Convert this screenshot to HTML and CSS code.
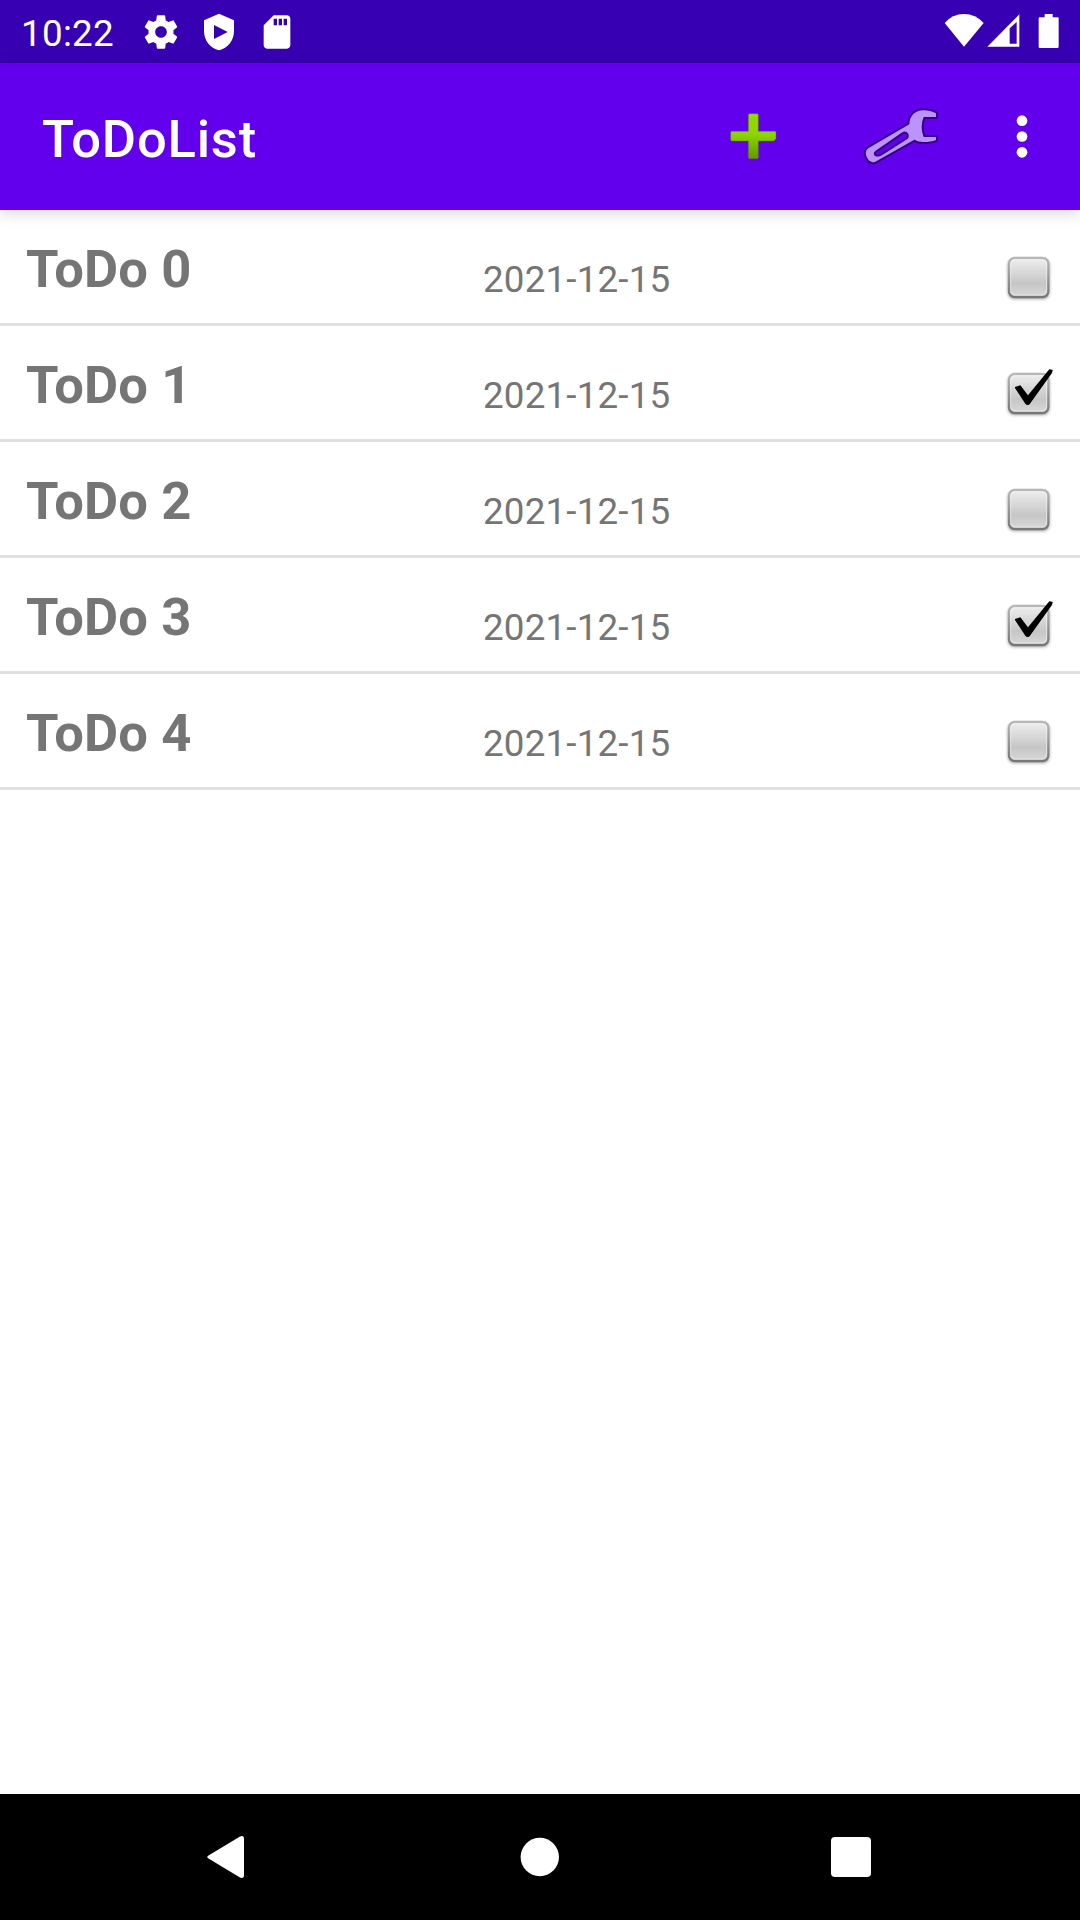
FILE: index.html
```html
<!DOCTYPE html>
<html lang="en">
<head>
<meta charset="utf-8">
<title>ToDoList</title>
<link rel="stylesheet" href="styles.css">
</head>
<body>
<svg class="defs" aria-hidden="true">
  <defs>
    <linearGradient id="box-fill" x1="0" y1="0" x2="0" y2="1">
      <stop offset="0" stop-color="#efefef"/><stop offset=".65" stop-color="#c6c6c6"/><stop offset="1" stop-color="#d8d8d8"/>
    </linearGradient>
    <linearGradient id="box-edge" x1="0" y1="0" x2="0" y2="1">
      <stop offset="0" stop-color="#b8b8b8"/><stop offset="1" stop-color="#777"/>
    </linearGradient>
    <linearGradient id="plus-fill" x1="0" y1="0" x2="0" y2="1">
      <stop offset="0" stop-color="#91dc00"/><stop offset=".45" stop-color="#8dd600"/><stop offset="1" stop-color="#649700"/>
    </linearGradient>
    <filter id="soft" x="-20%" y="-20%" width="140%" height="140%"><feGaussianBlur stdDeviation="4"/></filter>
    <filter id="smooth" x="-10%" y="-10%" width="120%" height="120%"><feGaussianBlur stdDeviation="1.500"/></filter>
    <symbol id="box" viewBox="30 30 240 240">
      <rect x="83" y="86" width="126" height="122" rx="20" fill="#000" opacity=".32" filter="url(#soft)"/>
      <g filter="url(#smooth)">
        <rect x="87" y="84" width="118" height="117" rx="17" fill="url(#box-fill)" stroke="url(#box-edge)" stroke-width="7"/>
        <rect x="92" y="89" width="108" height="106" rx="13" fill="none" stroke="#fff" stroke-opacity=".5" stroke-width="3"/>
      </g>
    </symbol>
    <symbol id="check" viewBox="30 30 240 240">
      <path d="M108 125L120 121L144 153L209 73L215 74L213 80L148 171Q143 177 138 171Z" fill="#000" stroke="#000" stroke-width="6" stroke-linejoin="round" filter="url(#smooth)"/>
    </symbol>
  </defs>
</svg>
<div class="screen">
  <header class="status">
    <span class="clock">10:22</span>
    <div class="notices">
      <svg class="notice" viewBox="0 0 24 24"><path d="M19.430 12.980c.04-.32.07-.64.07-.98s-.03-.66-.07-.98l2.110-1.650c.19-.15.24-.42.12-.64l-2-3.460c-.12-.22-.39-.3-.61-.22l-2.490 1c-.52-.4-1.080-.73-1.690-.98l-.38-2.650C14.460 2.180 14.250 2 14 2h-4c-.25 0-.46.18-.49.42l-.38 2.650c-.61.25-1.170.59-1.690.98l-2.490-1c-.23-.09-.49 0-.61.22l-2 3.460c-.13.22-.07.49.12.64l2.110 1.650c-.04.32-.07.65-.07.98s.03.66.07.98l-2.110 1.650c-.19.15-.24.42-.12.64l2 3.460c.12.22.39.3.61.22l2.490-1c.52.4 1.080.73 1.690.98l.38 2.650c.03.24.24.42.49.42h4c.25 0 .46-.18.49-.42l.38-2.650c.61-.25 1.170-.59 1.690-.98l2.490 1c.23.09.49 0 .61-.22l2-3.460c.12-.22.07-.49-.12-.64l-2.110-1.650zM12 15.500c-1.930 0-3.500-1.570-3.500-3.500s1.570-3.500 3.500-3.500 3.500 1.570 3.500 3.500-1.570 3.500-3.500 3.500z"/></svg>
      <svg class="notice" viewBox="0 0 24 24"><path fill-rule="evenodd" d="M12 1L3 5v6.500C3 17 6.700 21.600 12 23c5.300-1.400 9-6 9-11.500V5zM9 7.800l8.200 4.200L9 16.200z"/></svg>
      <svg class="notice" viewBox="0 0 24 24"><path d="M18 2h-8L4.020 8 4 20c0 1.100.9 2 2 2h12c1.100 0 2-.9 2-2V4c0-1.100-.9-2-2-2zm-6 6h-2V4h2v4zm3 0h-2V4h2v4zm3 0h-2V4h2v4z"/></svg>
    </div>
    <svg class="signals" viewBox="70 30 360 120">
      <path d="M133 140L75 69Q98 42 133 42T192 69Z"/>
      <path fill-rule="evenodd" d="M203 140L299 43V140ZM270 85V131H291V66Z"/>
      <path d="M357 55Q357 52 360 52H375V42H399V52H414Q417 52 417 55V140Q417 144 413 144H361Q357 144 357 140Z"/>
    </svg>
  </header>
  <header class="appbar">
    <h1 class="heading">ToDoList</h1>
    <svg class="plus" viewBox="80 60 160 160"><path d="M148 71H170Q174 71 174 75V124H223Q227 124 227 128V146L221 153H174V202Q174 206 170 206H148Q144 206 144 202V153H95Q91 153 91 149V128Q91 124 95 124H144V75Q144 71 148 71Z" fill="url(#plus-fill)" stroke="#558000" stroke-opacity=".65" stroke-width="2"/></svg>
    <svg class="wrench" viewBox="30 40 250 190"><path fill-rule="evenodd" d="M258 68Q242 59 220 59C196 59 178 76 178 101L56 172C45 179 45 192 54 206Q62 219 76 213L193 147Q205 154 220 154Q244 154 258 148V139H221Q209 109 221 79H258ZM77 180L157 125C170 116 184 136 172 145L97 193C76 206 64 189 77 180Z"/></svg>
    <svg class="more" viewBox="490 60 54 160"><circle cx="517" cy="92" r="16"/><circle cx="517" cy="139.500" r="16"/><circle cx="517" cy="187" r="16"/></svg>
  </header>
  <main class="list">
    <div class="row"><span class="name">ToDo 0</span><span class="date">2021-12-15</span><svg class="tick"><use href="#box"/></svg></div>
    <div class="row"><span class="name">ToDo 1</span><span class="date">2021-12-15</span><svg class="tick"><use href="#box"/><use href="#check"/></svg></div>
    <div class="row"><span class="name">ToDo 2</span><span class="date">2021-12-15</span><svg class="tick"><use href="#box"/></svg></div>
    <div class="row"><span class="name">ToDo 3</span><span class="date">2021-12-15</span><svg class="tick"><use href="#box"/><use href="#check"/></svg></div>
    <div class="row"><span class="name">ToDo 4</span><span class="date">2021-12-15</span><svg class="tick"><use href="#box"/></svg></div>
  </main>
  <nav class="navbar">
    <svg class="key" viewBox="0 0 60 60"><path d="M11.500 28.500L43 9.500Q47 8 47 12V48Q47 52 43 50.500L11.500 31.500Q9 30 11.500 28.500Z"/></svg>
    <svg class="key" viewBox="0 0 60 60"><circle cx="30.800" cy="30" r="19.200"/></svg>
    <svg class="key" viewBox="0 0 60 60"><rect x="10" y="10" width="40" height="40" rx="4"/></svg>
  </nav>
</div>
</body>
</html>
```
FILE: styles.css
```css
* { box-sizing: border-box; }
body {
  margin: 0;
  background: #fff;
  font-family: Roboto, sans-serif;
}
svg { display: block; flex: none; }
.defs { position: absolute; width: 0; height: 0; }
.screen {
  display: flex;
  flex-direction: column;
  width: 1080px;
  height: 1920px;
  overflow: hidden;
}
.status {
  display: flex;
  height: 63px;
  padding: 0 17px 0 21px;
  background: #3700b3;
  fill: #fff;
}
.clock {
  width: 120px;
  padding-top: 12px;
  color: #fff;
  font-size: 36.75px;
  line-height: 43px;
  letter-spacing: .3px;
}
.notices {
  display: flex;
  gap: 18px;
  padding-top: 12px;
}
.notice { width: 40px; height: 40px; }
.signals {
  width: 120px;
  height: 40px;
  margin: 10px 0 0 auto;
}
.appbar {
  display: flex;
  align-items: flex-start;
  z-index: 1;
  height: 147px;
  padding: 0 48.67px 0 42px;
  background: #6200ee;
  box-shadow: 0 3px 14px rgba(0, 0, 0, .17);
}
.heading {
  flex: 1;
  margin: 0;
  padding-top: 45px;
  color: #fff;
  font-size: 52.5px;
  font-weight: 500;
  line-height: 62px;
  letter-spacing: .8px;
}
.plus {
  width: 53.33px;
  height: 53.33px;
  margin: 47px 80px 0 0;
}
.wrench {
  width: 83.33px;
  height: 63.33px;
  margin: 40.6px 70px 0 0;
  fill: #bb93fa;
  stroke: #370083;
  stroke-width: 12;
  stroke-linejoin: round;
  paint-order: stroke;
}
.more {
  width: 18px;
  height: 53.33px;
  margin-top: 47px;
  fill: #fff;
}
.list { flex: 1; }
.row {
  display: flex;
  align-items: flex-start;
  height: 116px;
  padding: 28px 10px 0 26px;
  border-bottom: 3px solid #e0e0e0;
  color: #757575;
}
.name {
  width: 457px;
  font-size: 52.5px;
  font-weight: 700;
  line-height: 62px;
  letter-spacing: .15px;
}
.date {
  flex: 1;
  padding-top: 20px;
  font-size: 36.75px;
  line-height: 43px;
  letter-spacing: .18px;
}
.tick {
  width: 80px;
  height: 80px;
  margin-top: 2px;
}
.navbar {
  display: flex;
  align-items: center;
  justify-content: space-between;
  height: 126px;
  padding: 0 199px 0 197px;
  background: #000;
  fill: #fff;
}
.key { width: 60px; height: 60px; }
```
